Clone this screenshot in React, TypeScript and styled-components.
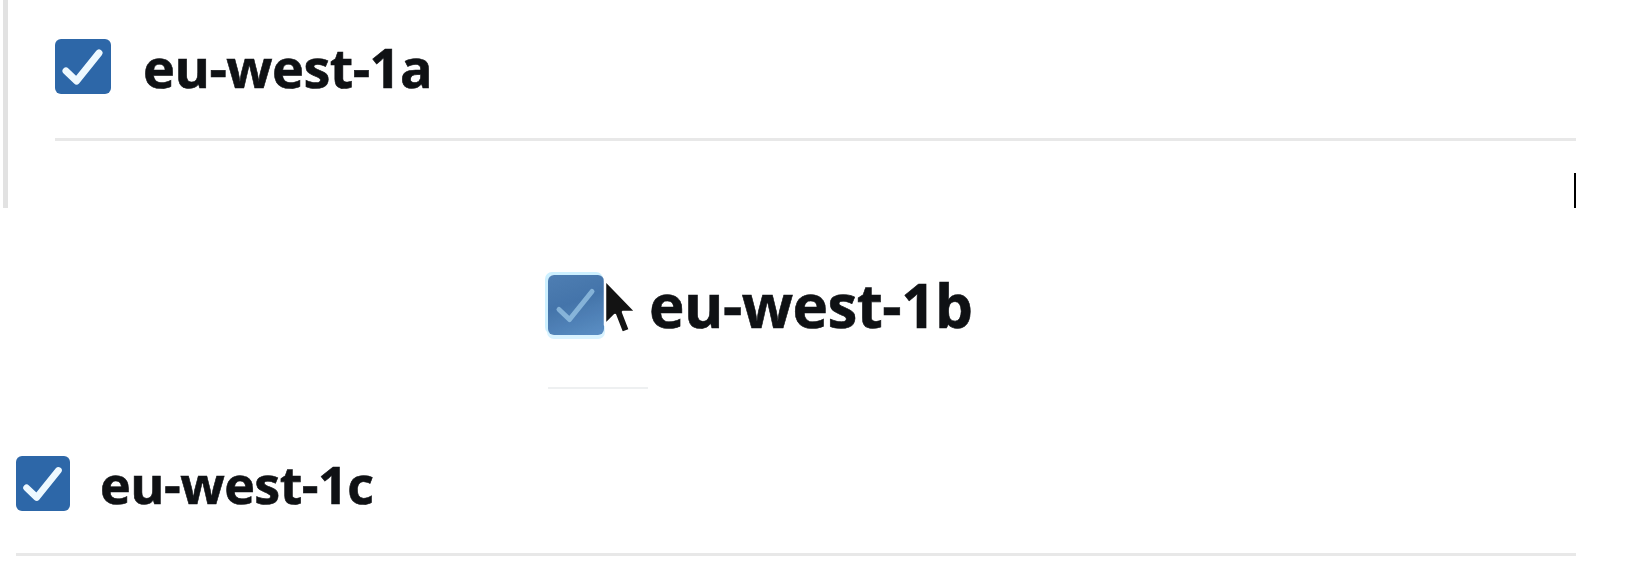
import styled, { createGlobalStyle } from "styled-components";

const GlobalStyle = createGlobalStyle`
  body {
    margin: 0;
    background: #ffffff;
    font-family: "Open Sans", "Noto Sans", sans-serif;
  }
`

const Page = styled.div`
  width: 1644px;
  height: 568px;
  overflow: hidden;
  display: flex;
  flex-direction: column;
  background: #fff;
`

const Zone = styled.div`
  display: flex;
  flex-direction: column;
  height: 208px;
  box-sizing: border-box;
  margin-left: 3px;
  border-left: 5px solid #e2e2e2;
  padding: 39px 0 0 47px;
`

const Row = styled.div<{ $gap: number; $indent?: number }>`
  display: flex;
  align-items: center;
  gap: ${(p) => p.$gap}px;
  padding-left: ${(p) => p.$indent || 0}px;
`

const Box = styled.div<{ $w: number; $h: number }>`
  width: ${(p) => p.$w}px;
  height: ${(p) => p.$h}px;
  border-radius: 6px;
  background: #2d67a8;
  flex-shrink: 0;
  position: relative;
  svg.tick {
    display: block;
    width: 100%;
    height: 100%;
  }
`

const DragBox = styled(Box)`
  background: linear-gradient(160deg, #3f73ad 0%, #3569a3 45%, #4e86c0 100%);
  box-shadow: -2px -2px 0 1px #c9efff, 0 3px 0 1px #d6f3ff;
  opacity: 0.92;
`

const Label = styled.span<{ $size: number }>`
  font-size: ${(p) => p.$size}px;
  font-weight: 700;
  line-height: 1;
  color: #0f1114;
  letter-spacing: -0.5px;
  white-space: nowrap;
  -webkit-text-stroke: 0.6px #0f1114;
`

const Divider = styled.div<{ $top: number }>`
  height: 3px;
  margin-top: ${(p) => p.$top}px;
  margin-right: 68px;
  background: #e8e8e8;
`

const Caret = styled.div`
  align-self: flex-end;
  width: 2px;
  height: 35px;
  margin-top: 32px;
  margin-right: 68px;
  background: #000;
`

const DragZone = styled.div`
  height: 248px;
  display: flex;
  flex-direction: column;
  padding-top: 67px;
  box-sizing: border-box;
`

const Ghost = styled.div`
  width: 100px;
  height: 2px;
  margin: 52px 0 0 548px;
  background: #eef0f1;
`

const Pointer = styled.svg`
  position: absolute;
  left: 54px;
  top: 2px;
  width: 36px;
  height: 62px;
`

const ListZone = styled.div`
  display: flex;
  flex-direction: column;
  padding-left: 16px;
`

const Check = ({ faded }: { faded?: boolean }) => (
  <svg className="tick" viewBox="0 0 56 55">
    <path
      d="M11 32 L21.5 42 L44 14"
      fill="none"
      stroke={faded ? "#9fd0ee" : "#eef9ff"}
      strokeWidth={faded ? 5 : 7}
      strokeLinecap="round"
      strokeLinejoin="round"
      opacity={faded ? 0.65 : 1}
    />
  </svg>
)

export default function App() {
  return (
    <Page>
      <GlobalStyle />
      <Zone>
        <Row $gap={32}>
          <Box $w={56} $h={55}>
            <Check />
          </Box>
          <Label $size={54}>eu-west-1a</Label>
        </Row>
        <Divider $top={44} />
        <Caret />
      </Zone>

      <DragZone>
        <Row $gap={45} $indent={548}>
          <DragBox $w={56} $h={60}>
            <Check faded />
            <Pointer viewBox="0 0 36 62">
              <path
                d="M3 3 L3 48 L13 38 L20 56 L28 53 L21 35 L34 35 Z"
                fill="#000"
                stroke="#fff"
                strokeWidth="2.5"
                strokeLinejoin="round"
              />
            </Pointer>
          </DragBox>
          <Label $size={60}>eu-west-1b</Label>
        </Row>
        <Ghost />
      </DragZone>

      <ListZone>
        <Row $gap={30}>
          <Box $w={54} $h={55}>
            <Check />
          </Box>
          <Label $size={52}>eu-west-1c</Label>
        </Row>
        <Divider $top={42} />
      </ListZone>
    </Page>
  )
}
